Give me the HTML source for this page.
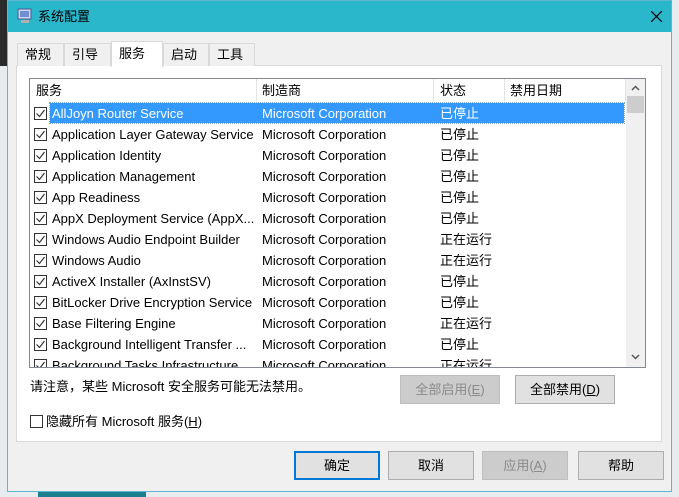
<!DOCTYPE html>
<html><head><meta charset="utf-8"><style>
*{margin:0;padding:0;box-sizing:border-box}
body{width:679px;height:497px;overflow:hidden;background:#e9ecee;font-family:"Liberation Sans","Noto Sans CJK SC",sans-serif;font-size:13px;line-height:15px;color:#000;position:relative}
.abs{position:absolute}
.win{left:7px;top:0;width:665px;height:492px;background:#f0f0f0;border:1px solid #5fb7cf}
.title{left:0;top:0;width:663px;height:31px;background:#2bb7cb}
.tab{top:42px;height:23px;border:1px solid #d9d9d9;border-bottom:none;background:#f0f0f0;padding:3px 0 0 7px}
.panel{left:8px;top:64px;width:646px;height:377px;background:#fff;border:1px solid #d9d9d9}
.lv{left:29px;top:78px;width:617px;height:290px;border:1px solid #828790;background:#fff;overflow:hidden}
.row{position:absolute;left:0;height:21px;width:596px}
.row span{position:absolute;top:3px;white-space:nowrap}
.cb{position:absolute;left:4px;top:4px;width:13px;height:13px;border:1px solid #333;background:#fff}
.cb svg{position:absolute;left:0px;top:0px}
.btn{height:29px;border:1px solid #adadad;background:#e1e1e1;text-align:center;line-height:27px}
.dis{color:#8a8a8a;background:#cccccc;border-color:#bfbfbf}
</style></head><body>
<div class="abs" style="left:0;top:0;width:7px;height:66px;background:#2b2b2b"></div>
<div class="abs" style="left:38px;top:491px;width:108px;height:6px;background:#1a7f8f"></div>
<div class="abs win">
 <div class="abs title">
  <svg class="abs" style="left:9px;top:7px" width="16" height="16" viewBox="0 0 16 16"><rect x="1" y="1" width="13" height="10" fill="#c9d8ee" stroke="#4a5a9a"/><rect x="3" y="3" width="9" height="6" fill="#6f8fd0"/><rect x="4" y="12" width="8" height="3" fill="#b0b0b0"/></svg>
  <span class="abs" style="left:30px;top:8px;font-size:13px">系统配置</span>
  <svg class="abs" style="left:643px;top:10px" width="11" height="11"><path d="M0 0L11 11M11 0L0 11" stroke="#000" stroke-width="1.2"/></svg>
 </div>
 <div class="abs panel"></div>
 <div class="abs tab" style="left:9px;width:47px">常规</div>
 <div class="abs tab" style="left:56px;width:47px">引导</div>
 <div class="abs tab" style="left:103px;top:40px;height:26px;width:52px;background:#fff;border-color:#d9d9d9;padding-top:4px">服务</div>
 <div class="abs tab" style="left:155px;width:46px">启动</div>
 <div class="abs tab" style="left:201px;width:46px">工具</div>
</div>
<div class="abs lv">
 <div class="abs" style="left:0;top:0;width:596px;height:22px">
  <span class="abs" style="left:6px;top:4px">服务</span>
  <span class="abs" style="left:232px;top:4px">制造商</span>
  <span class="abs" style="left:410px;top:4px">状态</span>
  <span class="abs" style="left:480px;top:4px">禁用日期</span>
  <div class="abs" style="left:226px;top:0;width:1px;height:22px;background:#e5e5e5"></div>
  <div class="abs" style="left:403px;top:0;width:1px;height:22px;background:#e5e5e5"></div>
  <div class="abs" style="left:474px;top:0;width:1px;height:22px;background:#e5e5e5"></div>
  <div class="abs" style="left:595px;top:0;width:1px;height:22px;background:#e5e5e5"></div>
 </div>
 <div class="abs" style="left:596px;top:0;width:19px;height:288px;background:#f0f0f0">
  <svg class="abs" style="left:5px;top:6px" width="9" height="6"><path d="M1 5L4.5 1.5L8 5" stroke="#555" stroke-width="1.5" fill="none"/></svg>
  <div class="abs" style="left:1px;top:17px;width:17px;height:17px;background:#cdcdcd"></div>
  <svg class="abs" style="left:5px;top:275px" width="9" height="6"><path d="M1 1L4.5 4.5L8 1" stroke="#555" stroke-width="1.5" fill="none"/></svg>
 </div>
 <div id="rows"></div>
</div>
<script>
var d=[["AllJoyn Router Service","已停止"],["Application Layer Gateway Service","已停止"],["Application Identity","已停止"],["Application Management","已停止"],["App Readiness","已停止"],["AppX Deployment Service (AppX...","已停止"],["Windows Audio Endpoint Builder","正在运行"],["Windows Audio","正在运行"],["ActiveX Installer (AxInstSV)","已停止"],["BitLocker Drive Encryption Service","已停止"],["Base Filtering Engine","正在运行"],["Background Intelligent Transfer ...","已停止"],["Background Tasks Infrastructure ...","正在运行"]];
var h="";d.forEach(function(r,i){var t=24+i*21;var sel=i==0;
h+='<div class="row" style="top:'+t+'px">'+(sel?'<div class="abs" style="left:20px;top:0;width:574px;height:20px;background:#3399ff;outline:1px dotted #8ab"></div>':'')+
'<div class="cb"><svg width="11" height="11"><path d="M1.5 5.5L4.5 8.5L9.5 2" stroke="#333" stroke-width="1.2" fill="none"/></svg></div>'+
'<span style="left:22px;'+(sel?'color:#fff':'')+'">'+r[0]+'</span><span style="left:232px;'+(sel?'color:#fff':'')+'">Microsoft Corporation</span><span style="left:410px;'+(sel?'color:#fff':'')+'">'+r[1]+'</span></div>';});
document.getElementById("rows").innerHTML=h;
</script>
<span class="abs" style="left:30px;top:379px">请注意，某些 Microsoft 安全服务可能无法禁用。</span>
<div class="abs btn dis" style="left:400px;top:375px;width:100px">全部启用(<u>E</u>)</div>
<div class="abs btn" style="left:515px;top:375px;width:100px">全部禁用(<u>D</u>)</div>
<div class="abs" style="left:30px;top:415px;width:13px;height:13px;border:1px solid #333;background:#fff"></div>
<span class="abs" style="left:46px;top:414px">隐藏所有 Microsoft 服务(<u>H</u>)</span>
<div class="abs btn" style="left:294px;top:451px;width:86px;border:2px solid #0078d7;line-height:25px">确定</div>
<div class="abs btn" style="left:388px;top:451px;width:86px">取消</div>
<div class="abs btn dis" style="left:482px;top:451px;width:86px">应用(<u>A</u>)</div>
<div class="abs btn" style="left:578px;top:451px;width:86px">帮助</div>
</body></html>
